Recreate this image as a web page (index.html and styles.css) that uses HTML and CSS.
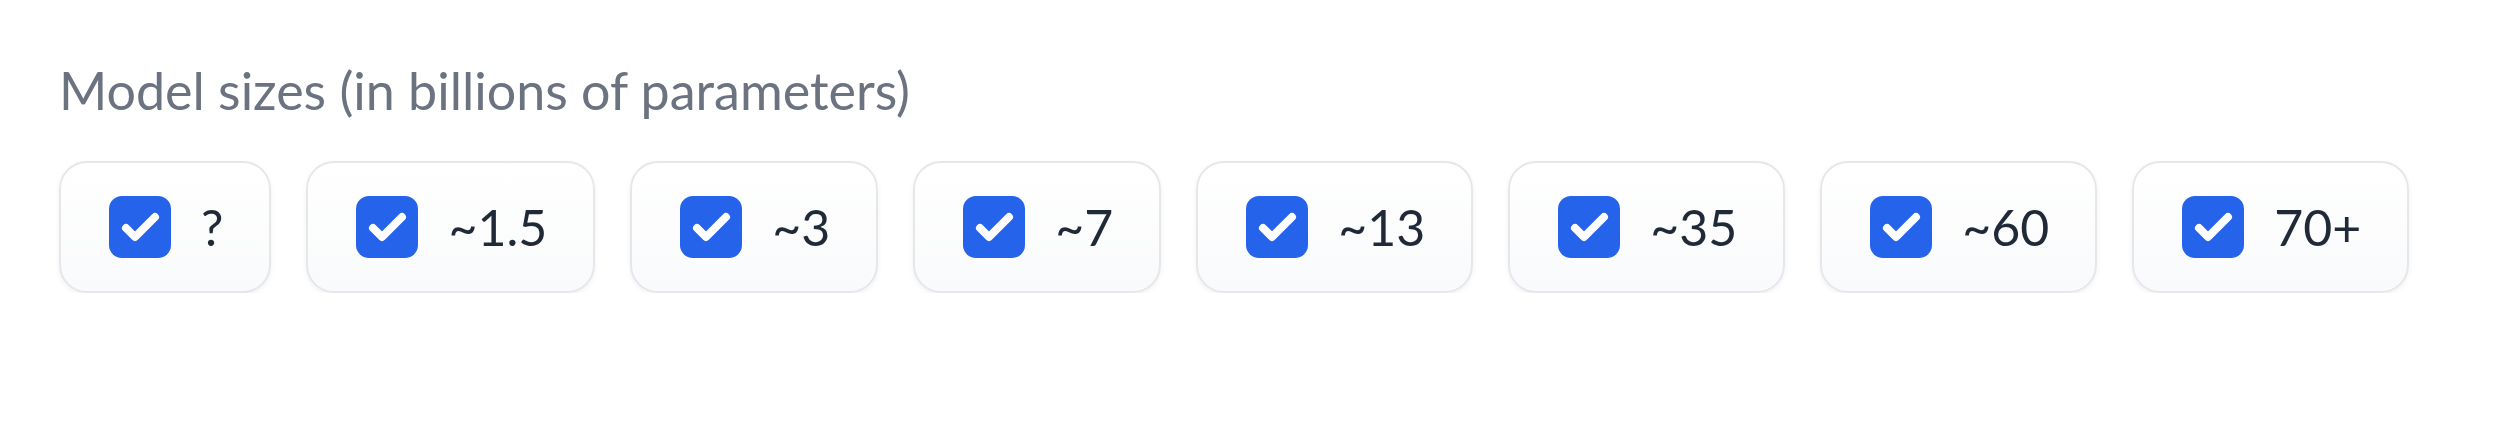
FILE: index.html
```html
<!DOCTYPE html>
<html>
<head>
<meta charset="utf-8">
<link rel="stylesheet" href="styles.css">
</head>
<body>
<div class="block">
  <div class="label">Model sizes (in billions of parameters)</div>
  <div class="group">
    <label class="chip"><span class="box"><svg viewBox="0 0 62 62"><polyline points="17,32 26,41 46,21"/></svg></span><span class="txt">?</span></label>
    <label class="chip"><span class="box"><svg viewBox="0 0 62 62"><polyline points="17,32 26,41 46,21"/></svg></span><span class="txt">~1.5</span></label>
    <label class="chip"><span class="box"><svg viewBox="0 0 62 62"><polyline points="17,32 26,41 46,21"/></svg></span><span class="txt">~3</span></label>
    <label class="chip"><span class="box"><svg viewBox="0 0 62 62"><polyline points="17,32 26,41 46,21"/></svg></span><span class="txt">~7</span></label>
    <label class="chip"><span class="box"><svg viewBox="0 0 62 62"><polyline points="17,32 26,41 46,21"/></svg></span><span class="txt">~13</span></label>
    <label class="chip"><span class="box"><svg viewBox="0 0 62 62"><polyline points="17,32 26,41 46,21"/></svg></span><span class="txt">~35</span></label>
    <label class="chip"><span class="box"><svg viewBox="0 0 62 62"><polyline points="17,32 26,41 46,21"/></svg></span><span class="txt">~60</span></label>
    <label class="chip"><span class="box"><svg viewBox="0 0 62 62"><polyline points="17,32 26,41 46,21"/></svg></span><span class="txt">70+</span></label>
  </div>
</div>
</body>
</html>
```
FILE: styles.css
```css
html, body {
  margin: 0;
  padding: 0;
  background: #ffffff;
}
body {
  font-family: "Lato", "Liberation Sans", sans-serif;
}
.block {
  padding: 58px 0 0 59px;
}
.label {
  font-size: 52px;
  line-height: 64px;
  color: #6b7280;
  margin-bottom: 39px;
}
.group {
  display: flex;
  gap: 35px;
}
.chip {
  display: inline-flex;
  align-items: center;
  gap: 30px;
  height: 132px;
  box-sizing: border-box;
  padding: 0 46px 0 48px;
  border: 2px solid #e5e7eb;
  border-radius: 28px;
  background: linear-gradient(to bottom, #ffffff, #f9fafb);
  box-shadow: 0 2px 5px rgba(0, 0, 0, 0.06);
}
.box {
  width: 62px;
  height: 62px;
  border-radius: 13px;
  background: #2563eb;
  display: flex;
  flex: none;
}
.box svg {
  width: 62px;
  height: 62px;
}
.box polyline {
  fill: none;
  stroke: #ffffff;
  stroke-width: 8;
  stroke-linecap: round;
  stroke-linejoin: round;
}
.txt {
  font-size: 50px;
  line-height: 60px;
  color: #1f2937;
}
```
